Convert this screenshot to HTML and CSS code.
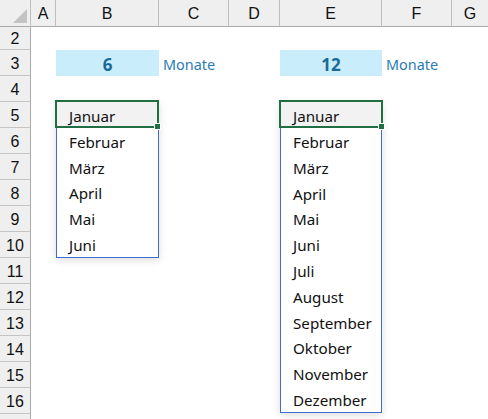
FILE: index.html
```html
<!DOCTYPE html>
<html lang="de">
<head>
<meta charset="utf-8">
<title>Monate</title>
<link rel="stylesheet" href="styles.css">
</head>
<body>
<div class="sheet">
  <div class="corner"><span class="tri"></span></div>
  <div class="ch">A</div>
  <div class="ch">B</div>
  <div class="ch">C</div>
  <div class="ch">D</div>
  <div class="ch">E</div>
  <div class="ch">F</div>
  <div class="ch ch-last">G</div>

  <div class="rh r2">2</div>
  <div class="rh r3">3</div>
  <div class="rh r4">4</div>
  <div class="rh r5">5</div>
  <div class="rh r6">6</div>
  <div class="rh r7">7</div>
  <div class="rh r8">8</div>
  <div class="rh r9">9</div>
  <div class="rh r10">10</div>
  <div class="rh r11">11</div>
  <div class="rh r12">12</div>
  <div class="rh r13">13</div>
  <div class="rh r14">14</div>
  <div class="rh r15">15</div>
  <div class="rh r16">16</div>
  <div class="rh r17"></div>

  <div class="count count-b">6</div>
  <div class="unit unit-c">Monate</div>
  <div class="count count-e">12</div>
  <div class="unit unit-f">Monate</div>

  <ul class="list list-b">
    <li class="item active">Januar</li>
    <li class="item">Februar</li>
    <li class="item">März</li>
    <li class="item">April</li>
    <li class="item">Mai</li>
    <li class="item">Juni</li>
  </ul>
  <div class="sel sel-b"></div>

  <ul class="list list-e">
    <li class="item active">Januar</li>
    <li class="item">Februar</li>
    <li class="item">März</li>
    <li class="item">April</li>
    <li class="item">Mai</li>
    <li class="item">Juni</li>
    <li class="item">Juli</li>
    <li class="item">August</li>
    <li class="item">September</li>
    <li class="item">Oktober</li>
    <li class="item">November</li>
    <li class="item">Dezember</li>
  </ul>
  <div class="sel sel-e"></div>
</div>
</body>
</html>
```

FILE: styles.css
```css
html, body {
  margin: 0;
  padding: 0;
  background: #ffffff;
}

.sheet {
  display: grid;
  grid-template-columns: 31px 25px 103px 70px 51px 102px 70px 36px;
  grid-template-rows: 27px 23px repeat(14, 26px) 5px;
  width: 488px;
  height: 419px;
  overflow: hidden;
  font-family: "Liberation Sans", Arial, sans-serif;
}

.corner {
  grid-row: 1;
  grid-column: 1;
  background: #efefef;
  border-right: 1px solid #bfbfbf;
  border-bottom: 1px solid #a9a9a9;
  box-sizing: border-box;
  position: relative;
}

.tri {
  position: absolute;
  right: 3px;
  bottom: 3px;
  width: 0;
  height: 0;
  border-left: 14px solid transparent;
  border-bottom: 14px solid #c3c3c3;
}

.ch {
  grid-row: 1;
  background: #efefef;
  border-right: 1px solid #bfbfbf;
  border-bottom: 1px solid #a9a9a9;
  box-sizing: border-box;
  display: flex;
  align-items: center;
  justify-content: center;
  padding-top: 2px;
  font-size: 16px;
  color: #111111;
}

.ch-last {
  border-right: none;
}

.rh {
  grid-column: 1;
  background: #efefef;
  border-right: 1px solid #a9a9a9;
  border-bottom: 1px solid #c4c4c4;
  box-sizing: border-box;
  display: flex;
  align-items: center;
  justify-content: center;
  padding-top: 2px;
  font-size: 16px;
  color: #111111;
}

.r2 { grid-row: 2; }
.r3 { grid-row: 3; }
.r4 { grid-row: 4; }
.r5 { grid-row: 5; }
.r6 { grid-row: 6; }
.r7 { grid-row: 7; }
.r8 { grid-row: 8; }
.r9 { grid-row: 9; }
.r10 { grid-row: 10; }
.r11 { grid-row: 11; }
.r12 { grid-row: 12; }
.r13 { grid-row: 13; }
.r14 { grid-row: 14; }
.r15 { grid-row: 15; }
.r16 { grid-row: 16; }
.r17 { grid-row: 17; border-bottom: none; }

.count {
  grid-row: 3;
  background: #caedfb;
  color: #1a6a98;
  font-family: "Noto Sans", sans-serif;
  font-weight: 700;
  font-size: 17px;
  display: flex;
  align-items: center;
  justify-content: center;
  padding-top: 2px;
}

.count-b { grid-column: 3; }
.count-e { grid-column: 6; }

.unit {
  grid-row: 3;
  color: #2a7bb6;
  font-family: "Noto Sans", sans-serif;
  font-size: 14.4px;
  display: flex;
  align-items: center;
  padding-left: 4px;
  padding-top: 2px;
  white-space: nowrap;
}

.unit-c { grid-column: 4; }
.unit-f { grid-column: 7; }

.list {
  list-style: none;
  margin: 0;
  padding: 0;
  box-sizing: border-box;
  border: 1px solid #3a6fcf;
  border-top: none;
  background: #ffffff;
  box-shadow: 0 2px 8px rgba(0, 0, 0, 0.14);
  display: grid;
  font-family: "Noto Sans", sans-serif;
  font-size: 15.2px;
  color: #111111;
  z-index: 1;
}

.list-b {
  grid-column: 3;
  grid-row: 5 / 11;
  grid-template-rows: 26px repeat(5, 1fr);
}

.list-e {
  grid-column: 6;
  grid-row: 5 / 17;
  margin-bottom: 1px;
  grid-template-rows: 26px repeat(11, 1fr);
}

.item {
  display: flex;
  align-items: center;
  padding-left: 12px;
  padding-top: 2px;
  white-space: nowrap;
}

.item.active {
  background: #f2f2f2;
}

.sel {
  grid-row: 5;
  margin: -2px 0 0 -1px;
  border: 2px solid #1f6f43;
  box-sizing: border-box;
  position: relative;
  z-index: 2;
}

.sel::after {
  content: "";
  position: absolute;
  right: -4px;
  bottom: -4px;
  width: 5px;
  height: 5px;
  background: #1f6f43;
  border: 1px solid #ffffff;
}

.sel-b { grid-column: 3; }
.sel-e { grid-column: 6; margin-right: -1px; }
```
